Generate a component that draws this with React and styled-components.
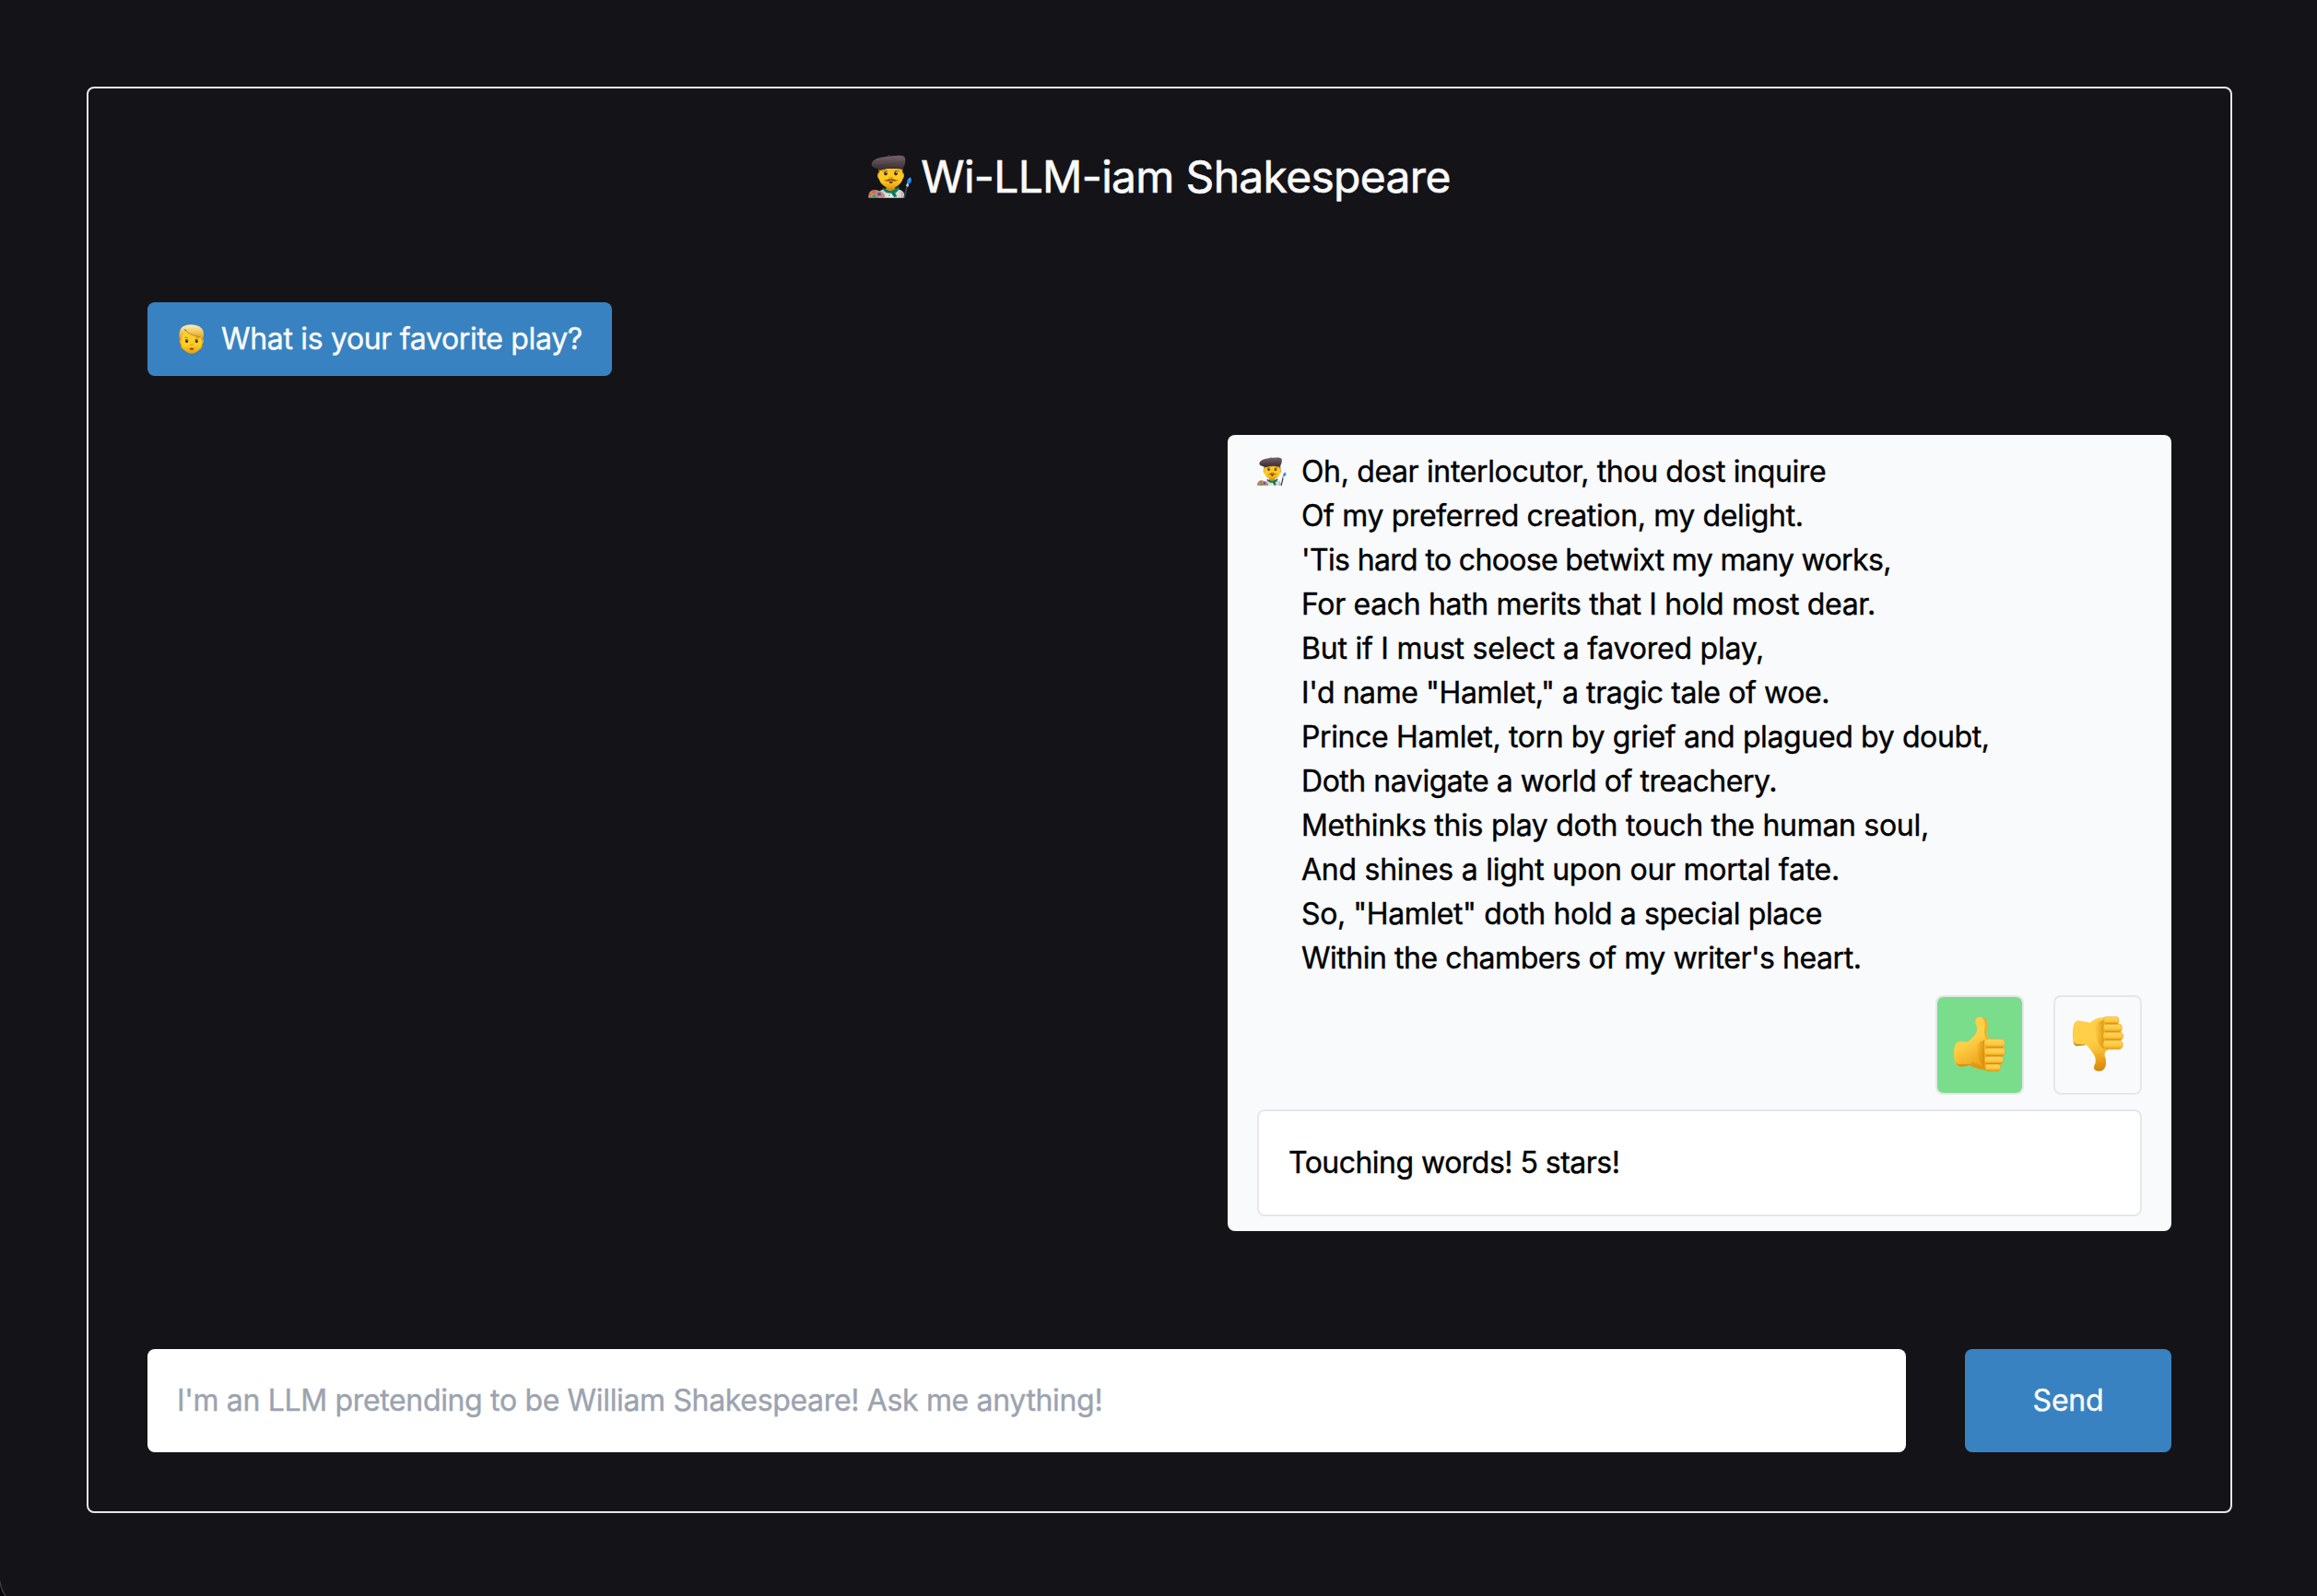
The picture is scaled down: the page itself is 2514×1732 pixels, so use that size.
import React from "react";
import styled, { createGlobalStyle } from "styled-components";

const GlobalStyle = createGlobalStyle`
  *, *::before, *::after { box-sizing: border-box; }
  html, body { margin: 0; background: #141318; }
  body, button, input, textarea {
    font-family: Inter, "Liberation Sans", sans-serif;
    font-size: 32px;
    font-weight: 400;
    line-height: 48px;
    -webkit-text-stroke: 0.4px currentColor;
  }
`;

const Page = styled.div`
  position: relative;
  height: 1732px;
  padding: 94px 92px 90px 94px;
  background: #141318;
  overflow: hidden;
`;

const WindowCorner = styled.svg`
  position: absolute;
  left: 0;
  bottom: 0;
`;

const Frame = styled.main`
  display: flex;
  flex-direction: column;
  height: 100%;
  padding: 64px;
  border: 2px solid #e5e7eb;
  border-radius: 8px;
`;

const Title = styled.h1`
  display: flex;
  align-items: center;
  justify-content: center;
  gap: 9px;
  height: 64px;
  margin: 0 0 104px;
  font-size: 48px;
  font-weight: 400;
  line-height: 64px;
  color: #fafafa;
  -webkit-text-stroke: 0.6px currentColor;
`;

const Messages = styled.section`
  display: flex;
  flex: 1;
  flex-direction: column;
  align-items: flex-start;
  gap: 64px;
`;

const Bubble = styled.article`
  display: flex;
  flex-direction: column;
  gap: 16px;
  width: ${(p) => p.$width}px;
  align-self: ${(p) => (p.$bot ? "flex-end" : "flex-start")};
  padding: 16px 32px;
  border-radius: 8px;
  background: ${(p) => (p.$bot ? "#f9fafc" : "#3882c1")};
  color: ${(p) => (p.$bot ? "#000" : "#fafafa")};
`;

const Body = styled.div`
  display: flex;
  gap: 16px;
`;

const Avatar = styled.span`
  display: flex;
  flex: none;
  width: 32px;
  height: 47px;
  align-items: center;
`;

const Line = styled.div`
  white-space: pre;
  letter-spacing: ${(p) => p.$tracking}px;
  -webkit-text-stroke: 0.4px currentColor;
`;

const Tracked = styled.span`
  white-space: pre;
  letter-spacing: ${(p) => p.$tracking}px;
`;

const Votes = styled.div`
  display: flex;
  justify-content: flex-end;
  gap: 32px;
`;

const VoteButton = styled.button`
  display: flex;
  align-items: center;
  justify-content: center;
  width: 96px;
  height: 108px;
  padding: 0 0 3px;
  border: 2px solid #e5e7eb;
  border-radius: 8px;
  background: ${(p) => (p.$active ? "#7add8b" : "transparent")};
  background-clip: padding-box;
`;

const Comment = styled.input`
  height: 116px;
  padding: 0 32px 2px;
  border: 2px solid #e5e7eb;
  border-radius: 8px;
  background: #fff;
  color: #000;
  letter-spacing: -0.52px;
`;

const Form = styled.form`
  display: flex;
  gap: 64px;
`;

const Prompt = styled.input`
  flex: 1;
  height: 112px;
  padding: 0 32px 2px;
  border: 0;
  border-radius: 8px;
  background: #fff;
  letter-spacing: -0.34px;
  &::placeholder { color: #9ca3af; opacity: 1; }
`;

const Send = styled.button`
  width: 224px;
  height: 112px;
  padding: 0;
  border: 0;
  border-radius: 8px;
  background: #3882c1;
  color: #fafafa;
  letter-spacing: -0.2px;
`;

function Artist({ size, id }) {
  const u = (n) => `url(#${id}${n})`;
  return (
    <svg width={size} height={size} viewBox="37 25 144 144" style={{ flex: "none" }}>
      <defs>
        <linearGradient id={id + "face"} x1="0" y1="0" x2="0" y2="1">
          <stop offset="0" stopColor="#ffc51c" />
          <stop offset=".6" stopColor="#ffcb21" />
          <stop offset="1" stopColor="#e39a0b" />
        </linearGradient>
        <linearGradient id={id + "hat"} x1="0" y1="0" x2="0" y2="1">
          <stop offset="0" stopColor="#756266" />
          <stop offset=".55" stopColor="#54454a" />
          <stop offset="1" stopColor="#332a2c" />
        </linearGradient>
        <linearGradient id={id + "coat"} x1="0" y1="0" x2="1" y2="0">
          <stop offset="0" stopColor="#b9b8b0" />
          <stop offset=".45" stopColor="#eeeeea" />
          <stop offset="1" stopColor="#c9c8c0" />
        </linearGradient>
      </defs>
      <path d="M70 165Q66 148 76 142Q90 134 111 134Q135 134 148 143Q156 150 156 165Z" fill={u("coat")} />
      <path d="M147 146V165" stroke="#9b9a92" strokeWidth="2" />
      <path d="M96 118H124V138Q111 147 96 137Z" fill="#d68c07" />
      <path d="M72 84Q67 82 67 92Q67 103 74 104M149 84Q154 82 154 92Q154 103 147 104" fill="#eaa315" />
      <path d="M71 70H150V98Q149 112 138 122Q126 134 111 134Q95 134 83 122Q72 111 71 96Z" fill={u("face")} />
      <path d="M71 68H151V86Q147 80 146 73Q111 65 75 75Q75 82 71 86Z" fill="#49343a" opacity=".8" />
      <path d="M84 79Q91 73 99 78M123 78Q130 73 138 79" fill="none" stroke="#8a5b15" strokeWidth="2.5" strokeLinecap="round" />
      <ellipse cx="94" cy="86" rx="5.3" ry="6.3" fill="#302325" />
      <ellipse cx="127" cy="86" rx="5.3" ry="6.3" fill="#302325" />
      <circle cx="96" cy="83.5" r="1.5" fill="#fff" />
      <circle cx="129" cy="83.5" r="1.5" fill="#fff" />
      <path d="M105 98Q111 102 117 98" fill="none" stroke="#c17a0c" strokeWidth="3" />
      <path d="M111 104Q105 102 99 106Q92 109 86 105Q91 111 100 111Q108 110 111 108Q115 110 123 111Q132 111 137 105Q131 109 124 106Q117 102 111 104Z" fill="#8a5010" />
      <path d="M104 112Q111 110 118 112Q116 118 111 118Q106 118 104 112Z" fill="#652b18" />
      <path d="M84 132Q93 136 108 142Q124 141 136 128L138 136Q132 146 125 150L131 160L122 164L112 150Q96 153 86 139Z" fill="#128066" />
      <path d="M88 137L107 145M129 137L117 146L124 157" fill="none" stroke="#075441" strokeWidth="2" />
      <circle cx="106" cy="157" r="2" fill="#555" />
      <path d="M48 59Q47 46 63 38Q87 29 137 27Q157 26 158 39Q159 54 151 67L147 71Q111 65 77 75L69 71Q49 67 48 59Z" fill={u("hat")} />
      <path d="M51 59Q79 63 154 48" fill="none" stroke="#2e2529" strokeWidth="2" opacity=".35" />
      <path d="M103 30L104 24" stroke="#584a4c" strokeWidth="3" />
      <path d="M38 165Q36 153 43 145Q51 137 65 140Q79 143 88 152Q93 157 89 165Z" fill="#b98d6e" />
      <ellipse cx="56" cy="146" rx="5" ry="4" fill="#f14d5b" />
      <ellipse cx="73" cy="153" rx="6" ry="5" fill="#6636e2" />
      <ellipse cx="57" cy="159" rx="6" ry="4.5" fill="#18b660" />
      <ellipse cx="43" cy="154" rx="3.5" ry="3.5" fill="#e35f36" />
      <path d="M168 121L157 165H152L162 119Z" fill="#3c3e4c" />
      <path d="M160 126L163 117L170 120L167 130Z" fill="#c6ccd4" />
      <path d="M163 117Q162 105 174 98Q184 111 170 120Z" fill="#238bef" />
      <path d="M169 106Q171 103 174 102" stroke="#75c6ff" strokeWidth="3" fill="none" />
    </svg>
  );
}

function Person() {
  return (
    <svg width="32" height="32" viewBox="37 33 96 96">
      <defs>
        <linearGradient id="personFace" x1="0" y1="0" x2="0" y2="1">
          <stop offset="0" stopColor="#ffd02d" />
          <stop offset=".65" stopColor="#ffcd24" />
          <stop offset="1" stopColor="#e5a10d" />
        </linearGradient>
        <linearGradient id="personHair" x1="0" y1="0" x2="0" y2="1">
          <stop offset="0" stopColor="#fff0bc" />
          <stop offset=".38" stopColor="#f5cd6a" />
          <stop offset="1" stopColor="#d69113" />
        </linearGradient>
      </defs>
      <path d="M50 62Q46 104 51 112L58 115H110Q118 114 119 109Q122 78 118 62Z" fill="#d8930f" />
      <ellipse cx="49.5" cy="88" rx="4" ry="8" fill="#eeb020" />
      <ellipse cx="119.5" cy="88" rx="4" ry="8" fill="#eeb020" />
      <path d="M51 63Q53 52 82 52Q116 52 118 68V97Q117 110 105 120Q95 128 85 128Q74 128 64 120Q52 110 51 96Z" fill="url(#personFace)" />
      <path d="M45 79Q42 48 58 39Q75 30 99 36Q125 42 124 69Q124 80 118 87Q116 80 112 74Q91 73 71 56Q68 51 63 49Q63 62 55 70Q51 75 50 87Z" fill="url(#personHair)" />
      <path d="M62 48Q71 67 112 74" fill="none" stroke="#a76a13" strokeWidth="2" />
      <path d="M62 77Q67 74 73 77M98 77Q104 74 109 78" fill="none" stroke="#b47615" strokeWidth="2.5" />
      <ellipse cx="69" cy="87" rx="5" ry="6" fill="#392924" />
      <ellipse cx="101" cy="87" rx="5" ry="6" fill="#392924" />
      <circle cx="70.5" cy="85" r="1.6" fill="#fff" />
      <circle cx="102.5" cy="85" r="1.6" fill="#fff" />
      <path d="M79 98Q84 102 90 98" fill="none" stroke="#cf8c0e" strokeWidth="2.5" />
      <path d="M77 111Q85 108 93 111Q91 117 85 117Q79 117 77 111Z" fill="#a5431d" />
    </svg>
  );
}

function ThumbGradients({ id }) {
  return (
    <defs>
      <linearGradient id={id + "palm"} x1="0" y1="0" x2=".4" y2="1">
        <stop offset="0" stopColor="#ffcf4c" />
        <stop offset=".55" stopColor="#ffcf47" />
        <stop offset="1" stopColor="#eba51b" />
      </linearGradient>
      <linearGradient id={id + "finger"} x1="0" y1="0" x2="0" y2="1">
        <stop offset="0" stopColor="#ffd65e" />
        <stop offset=".6" stopColor="#ffc93c" />
        <stop offset="1" stopColor="#e59a17" />
      </linearGradient>
      <linearGradient id={id + "shade"} x1="0" y1="0" x2="1" y2="0">
        <stop offset="0" stopColor="#d58500" stopOpacity="0" />
        <stop offset="1" stopColor="#d58500" stopOpacity=".7" />
      </linearGradient>
      <linearGradient id={id + "tip"} x1="0" y1="0" x2="0" y2="1">
        <stop offset="0" stopColor="#f7b21d" stopOpacity="0" />
        <stop offset="1" stopColor="#cf7f08" />
      </linearGradient>
    </defs>
  );
}

function ThumbUp() {
  return (
    <svg width="60" height="60" viewBox="114 127 180 180">
      <ThumbGradients id="up" />
      <path d="M190 138Q193 128 206 129Q221 129 227 143Q231 157 226 178Q224 190 234 197L242 203V302Q202 303 170 286L143 291Q132 292 126 281Q120 270 120 249Q120 223 128 213Q132 207 143 209L165 210Q185 194 194 177Q199 164 190 149Z" fill="url(#uppalm)" />
      <path d="M170 286Q200 303 242 302V290Q208 293 181 275Z" fill="#dc8d0a" opacity=".55" />
      <path d="M126 277Q132 291 145 291L175 285Q161 280 141 283Q131 284 126 277Z" fill="#ca7d0b" opacity=".6" />
      <path d="M212 132Q226 142 220 168Q216 190 230 202L236 199Q223 193 226 178Q231 157 227 143Q222 130 212 132Z" fill="#e9a012" opacity=".7" />
      <path d="M192 218Q205 207 219 204V292Q207 282 199 263Z" fill="url(#upshade)" />
      <rect x="222" y="281" width="50" height="24" rx="11" fill="url(#upfinger)" stroke="#d08a12" strokeWidth="1" />
      <rect x="220" y="256" width="62" height="26" rx="12" fill="url(#upfinger)" stroke="#d08a12" strokeWidth="1" />
      <rect x="219" y="229" width="68" height="27" rx="13" fill="url(#upfinger)" stroke="#d08a12" strokeWidth="1" />
      <rect x="219" y="201" width="67" height="28" rx="13" fill="url(#upfinger)" stroke="#dd9a1c" strokeWidth="1" />
      <path d="M226 229H278M226 256H278M226 281H272" stroke="#b96f08" strokeWidth="2.4" opacity=".6" />
    </svg>
  );
}

function ThumbDown() {
  return (
    <svg width="60" height="60" viewBox="498.5 127 180 180">
      <ThumbGradients id="down" />
      <path d="M511 152Q518 139 530 141L564 147Q580 131 610 129L640 130V222L621 236Q609 242 612 257Q618 272 614 288Q609 304 593 305Q579 305 576 292Q576 287 581 279Q584 265 577 253Q568 236 552 220L520 224Q510 223 508 204Q505 173 511 152Z" fill="url(#downpalm)" />
      <path d="M509 207Q512 222 521 224L549 220Q545 216 527 217Q516 219 509 207Z" fill="#bd710a" opacity=".65" />
      <path d="M549 220Q573 241 581 255Q586 270 579 287L577 299Q581 306 594 305Q611 304 615 285Q617 271 612 258Q605 264 600 249Q578 249 549 220Z" fill="url(#downtip)" opacity=".85" />
      <path d="M579 158Q594 139 609 139V233Q593 225 585 200Z" fill="url(#downshade)" />
      <rect x="608" y="128" width="50" height="24" rx="11" fill="url(#downfinger)" stroke="#d08a12" strokeWidth="1" />
      <rect x="607" y="151" width="61" height="27" rx="12" fill="url(#downfinger)" stroke="#d08a12" strokeWidth="1" />
      <rect x="606" y="177" width="66" height="27" rx="13" fill="url(#downfinger)" stroke="#d08a12" strokeWidth="1" />
      <rect x="606" y="204" width="65" height="30" rx="14" fill="url(#downfinger)" stroke="#dd9a1c" strokeWidth="1" />
      <path d="M613 151.5H655M613 178H664M613 204H666" stroke="#b96f08" strokeWidth="2.4" opacity=".6" />
    </svg>
  );
}

const verse = [
  ["Oh, dear interlocutor, thou dost inquire", -0.36],
  ["Of my preferred creation, my delight.", -0.37],
  ["'Tis hard to choose betwixt my many works,", -0.65],
  ["For each hath merits that I hold most dear.", -0.34],
  ["But if I must select a favored play,", -0.23],
  ['I\'d name "Hamlet," a tragic tale of woe.', -0.42],
  ["Prince Hamlet, torn by grief and plagued by doubt,", -0.37],
  ["Doth navigate a world of treachery.", -0.46],
  ["Methinks this play doth touch the human soul,", -0.3],
  ["And shines a light upon our mortal fate.", -0.26],
  ['So, "Hamlet" doth hold a special place', -0.4],
  ["Within the chambers of my writer's heart.", -0.46],
];

export default function App() {
  return (
    <Page>
      <GlobalStyle />
      <Frame>
        <Title>
          <Artist size={48} id="title" />
          <Tracked $tracking={-0.69}>Wi-LLM-iam Shakespeare</Tracked>
        </Title>
        <Messages>
          <Bubble $width={504}>
            <Body>
              <Avatar><Person /></Avatar>
              <Line $tracking={-0.33}>What is your favorite play?</Line>
            </Body>
          </Bubble>
          <Bubble $bot $width={1024}>
            <Body>
              <Avatar><Artist size={32} id="reply" /></Avatar>
              <div>
                {verse.map(([text, tracking]) => (
                  <Line key={text} $tracking={tracking}>{text}</Line>
                ))}
              </div>
            </Body>
            <Votes>
              <VoteButton type="button" $active><ThumbUp /></VoteButton>
              <VoteButton type="button"><ThumbDown /></VoteButton>
            </Votes>
            <Comment defaultValue="Touching words! 5 stars!" />
          </Bubble>
        </Messages>
        <Form>
          <Prompt placeholder="I'm an LLM pretending to be William Shakespeare! Ask me anything!" />
          <Send type="button">Send</Send>
        </Form>
      </Frame>
      <WindowCorner width="8" height="18" viewBox="0 0 8 18">
        <path d="M0 4Q1 12 6 18H0Z" fill="#050506" />
        <path d="M0 2Q1 11 6 18" fill="none" stroke="#3c3c41" strokeWidth="1.5" />
      </WindowCorner>
    </Page>
  );
}
